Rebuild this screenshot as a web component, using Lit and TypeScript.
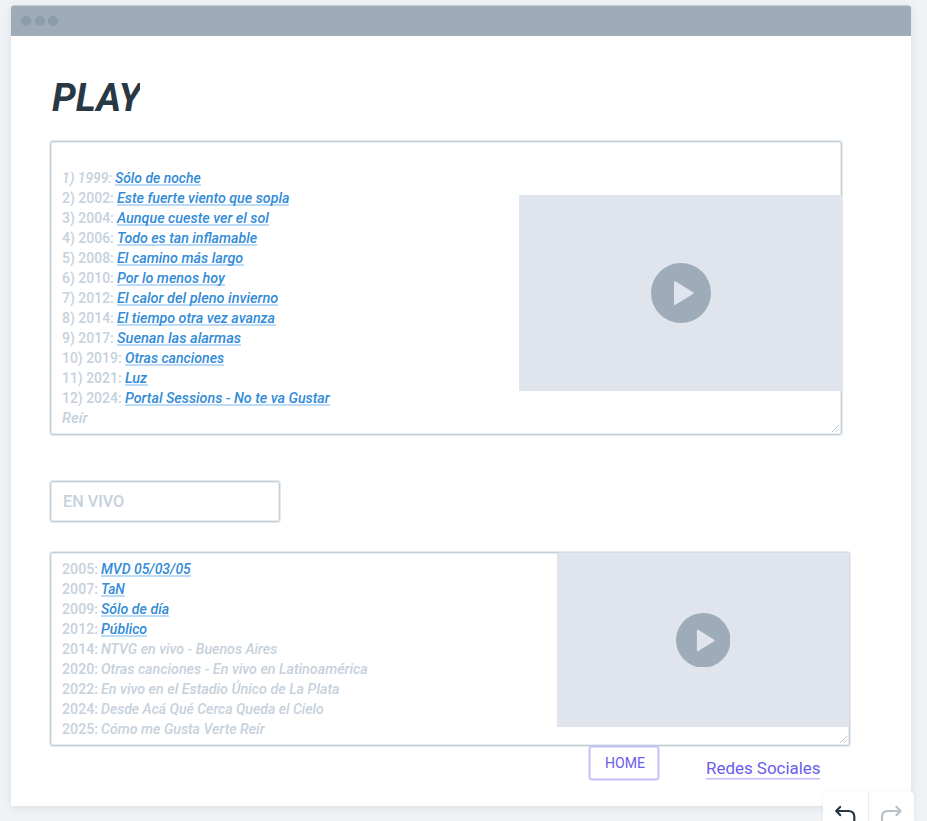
import { LitElement, html, css, nothing } from "lit";
import { customElement, property } from "lit/decorators.js";

/** Text squeezed or stretched horizontally to an exact width. */
@customElement("fit-text")
class FitText extends LitElement {
  @property({ type: Number }) width = 0;
  static styles = css`
    :host { display: inline-block; white-space: pre; vertical-align: top; }
    .inner { display: inline-block; transform-origin: 0 50%; white-space: pre; }
  `;
  async firstUpdated() {
    this.fit();
    await document.fonts.ready;
    this.fit();
  }
  fit() {
    const s = this.renderRoot.querySelector(".inner") as HTMLElement;
    this.style.width = this.width + "px";
    s.style.transform = `scaleX(${this.width / s.offsetWidth})`;
  }
  render() {
    return html`<span class="inner"><slot></slot></span>`;
  }
}

type Row = { pre?: string; preW?: number; gap?: number; title?: string; w?: number; link?: boolean; italicPre?: boolean };

const discs: Row[] = [
  { pre: "1) 1999:", preW: 49.5, gap: 3.5, title: "Sólo de noche", w: 86, link: true, italicPre: true },
  ...([
    ["2) 2002:", "Este fuerte viento que sopla", 172],
    ["3) 2004:", "Aunque cueste ver el sol", 151.5],
    ["4) 2006:", "Todo es tan inflamable", 140],
    ["5) 2008:", "El camino más largo", 126.5],
    ["6) 2010:", "Por lo menos hoy", 107.5],
    ["7) 2012:", "El calor del pleno invierno", 161],
    ["8) 2014:", "El tiempo otra vez avanza", 158.5],
    ["9) 2017:", "Suenan las alarmas", 124],
  ] as [string, string, number][]).map(([pre, title, w]) => ({ pre, title, w, preW: 51.8, gap: 3.4, link: true })),
  { pre: "10) 2019:", preW: 59.8, gap: 3.4, title: "Otras canciones", w: 99, link: true },
  { pre: "11) 2021:", preW: 59.8, gap: 3.4, title: "Luz", w: 22.5, link: true },
  { pre: "12) 2024:", preW: 59.8, gap: 3.4, title: "Portal Sessions - No te va Gustar", w: 205, link: true },
  { title: "Reír", w: 26 },
];

const live: Row[] = ([
  ["2005:", "MVD 05/03/05", 90, true],
  ["2007:", "TaN", 24, true],
  ["2009:", "Sólo de día", 68, true],
  ["2012:", "Público", 46, true],
  ["2014:", "NTVG en vivo - Buenos Aires", 176, false],
  ["2020:", "Otras canciones - En vivo en Latinoamérica", 267, false],
  ["2022:", "En vivo en el Estadio Único de La Plata", 238.5, false],
  ["2024:", "Desde Acá Qué Cerca Queda el Cielo", 222.5, false],
  ["2025:", "Cómo me Gusta Verte Reír", 164, false],
] as [string, string, number, boolean][]).map(([pre, title, w, link]) => ({ pre, title, w, link, preW: 36, gap: 3.3 }));

const grip = html`<svg class="grip" viewBox="0 0 9 9" width="9" height="9">
  <path d="M1 8 8 1M4.6 8 8 4.6" stroke="#bccbd9" stroke-width="1" fill="none" />
</svg>`;

const playIcon = (size: number) => html`<svg viewBox="0 0 60 60" width=${size} height=${size}>
  <circle cx="30" cy="30" r="30" fill="#9dacb8" />
  <path d="M24 19.2v21.8L41.5 30.2Z" fill="#e0e5ed" stroke="#e0e5ed" stroke-width="2" stroke-linejoin="round" />
</svg>`;

@customElement("app-root")
class AppRoot extends LitElement {
  static styles = css`
    :host {
      display: block; position: relative; box-sizing: border-box;
      width: 927px; height: 821px; padding: 6px 16px 0 11px; overflow: hidden;
      background: #eff3f6; font-family: Roboto, "Liberation Sans", sans-serif;
    }
    .window {
      box-sizing: border-box; height: 800px; background: #fff; border-radius: 3px 3px 0 0;
      box-shadow: 0 1px 8px rgba(40, 56, 69, 0.11);
    }
    .bar {
      box-sizing: border-box; height: 30px; padding: 0 10.4px; display: flex; align-items: center; gap: 3.3px;
      background: #9dacb8; border-radius: 3px 3px 0 0; box-shadow: 0 -0.5px 0 #9dacb8;
    }
    .dot { width: 10px; height: 10px; border-radius: 50%; background: #8c9cac; }
    .page { padding: 38px 0 0 39px; }
    h1 {
      margin: 0 0 0 1.5px; height: 47px; width: 88.5px; overflow: hidden; font-size: 39.4px; line-height: 47px;
      font-style: italic; font-weight: 700; color: #283845;
    }
    .box {
      position: relative; box-sizing: border-box; border: 1px solid #c4cfd9; border-radius: 3px; background: #fff;
      box-shadow: 0 0 0 1px rgba(196, 207, 217, 0.45), inset 0 0 0 1px rgba(196, 207, 217, 0.4);
    }
    .discs { margin-top: 20px; width: 792px; height: 294px; padding: 26px 11px 0; }
    .heading { margin-top: 46px; width: 230px; height: 41px; padding: 0 12px; font-size: 17px; line-height: 38px; font-weight: 500; color: #c6d1dc; }
    .live { margin-top: 30px; width: 800px; height: 194px; padding: 6px 11px 0; }
    .row { display: flex; height: 20px; line-height: 20px; font-size: 15.4px; font-weight: 550; color: #c6d1dc; }
    .title, .ital { font-style: italic; }
    .link { color: #328bd8; box-sizing: border-box; height: 18px; border-bottom: 2px solid #bcdcf8; }
    .video { position: absolute; display: flex; align-items: center; justify-content: center; background: #e0e5ed; }
    .video-a { right: -1px; top: 53px; width: 323px; height: 195.5px; }
    .video-b { right: 0; top: 0; width: 292.5px; height: 174px; box-shadow: 1px -1px 0 rgba(224, 229, 237, 0.6); }
    .grip { position: absolute; right: 1px; bottom: 1px; }
    .actions { display: flex; margin-left: 539px; position: relative; }
    .home {
      box-sizing: border-box; width: 70px; height: 34px; border: 1px solid #c4bffa; border-radius: 3px;
      box-shadow: inset 0 0 0 0.5px #c4bffa, 0 0 0 0.5px #c4bffa;
      color: #6a5cec; font-size: 15.5px; line-height: 32px; padding-left: 14.5px; background: #fff;
    }
    .social { margin: 10px 0 0 46.7px; height: 22px; line-height: 24px; font-size: 17px; color: #6a5cec; border-bottom: 1px solid #c4bffa; box-shadow: 0 0.5px 0 #c4bffa; }
    .history {
      position: absolute; left: 823px; top: 791px; width: 91px; height: 40px; display: flex; border-radius: 5px;
      background: #fff; box-shadow: 0 0 4px rgba(40, 56, 69, 0.06);
    }
    .undo { box-sizing: border-box; width: 46px; border-right: 1px solid #e9edf0; }
  `;

  rows(list: Row[]) {
    return list.map((r) => html`<div class="row">
      ${r.pre ? html`<fit-text class=${r.italicPre ? "ital" : ""} .width=${r.preW!} style="margin-right:${r.gap}px">${r.pre}</fit-text>` : nothing}
      <fit-text class="title ${r.link ? "link" : ""}" .width=${r.w!}>${r.title}</fit-text>
    </div>`);
  }

  render() {
    return html`
      <div class="window">
        <div class="bar"><span class="dot"></span><span class="dot"></span><span class="dot"></span></div>
        <div class="page">
          <h1><fit-text .width=${89}>PLAY</fit-text></h1>
          <div class="box discs">
            ${this.rows(discs)}
            <div class="video video-a">${playIcon(60)}</div>
            ${grip}
          </div>
          <div class="box heading"><fit-text .width=${61}>EN VIVO</fit-text></div>
          <div class="box live">
            ${this.rows(live)}
            <div class="video video-b">${playIcon(54.5)}</div>
            ${grip}
          </div>
          <div class="actions">
            <div class="home"><fit-text .width=${40}>HOME</fit-text></div>
            <div class="social"><fit-text .width=${114.5}>Redes Sociales</fit-text></div>
          </div>
        </div>
      </div>
      <div class="history">
        <svg class="undo" viewBox="0 0 46 40" width="46" height="40" fill="none" stroke="#283845" stroke-width="2.2" stroke-linecap="round" stroke-linejoin="round">
          <path d="M17.5 15.8 13.5 20l4 4.2M14 20h12q6 0 6 6v8" />
        </svg>
        <svg viewBox="0 0 45 40" width="45" height="40" fill="none" stroke="#b9c0c6" stroke-width="2.2" stroke-linecap="round" stroke-linejoin="round">
          <path d="M27.5 15.8l4 4.2-4 4.2M31 20H19q-6 0-6 6v8" />
        </svg>
      </div>`;
  }
}
